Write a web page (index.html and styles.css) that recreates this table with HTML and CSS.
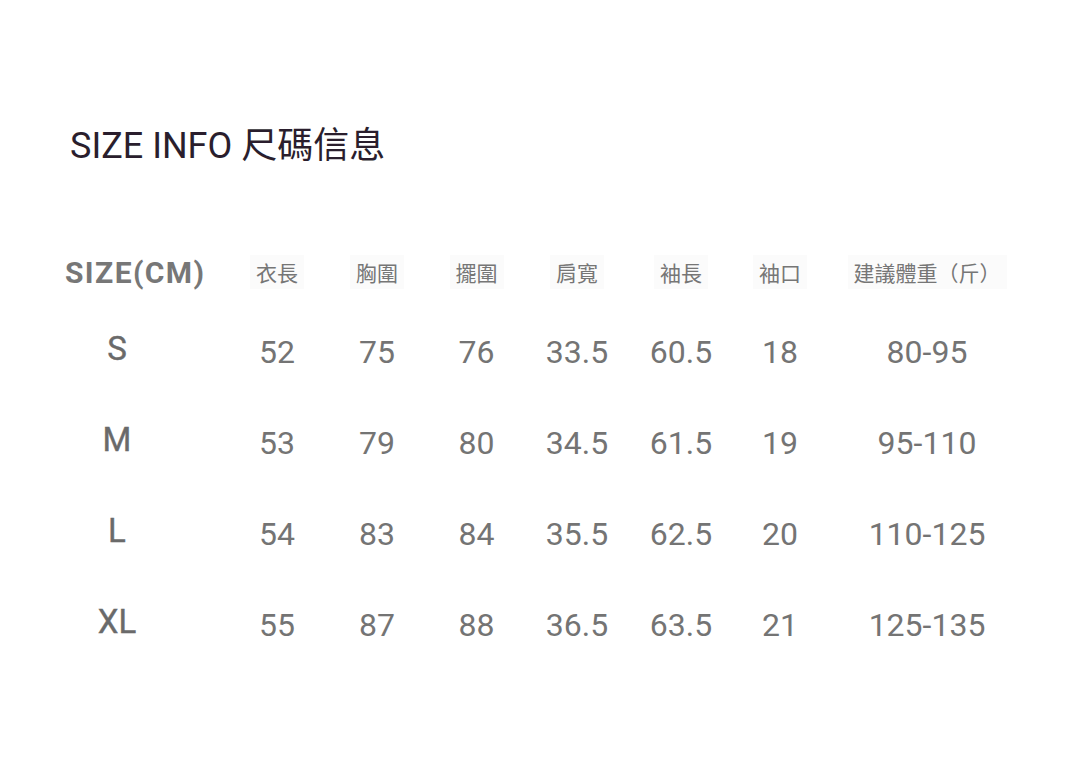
FILE: index.html
```html
<!DOCTYPE html>
<html lang="zh-Hant">
<head>
<meta charset="utf-8">
<title>SIZE INFO 尺碼信息</title>
<link rel="stylesheet" href="styles.css">
</head>
<body>
<main class="page">
  <h1 class="title">SIZE INFO 尺碼信息</h1>
  <div class="table">
    <div class="cell head size-head">SIZE(CM)</div>
    <div class="cell head"><span class="label">衣長</span></div>
    <div class="cell head"><span class="label">胸圍</span></div>
    <div class="cell head"><span class="label">擺圍</span></div>
    <div class="cell head"><span class="label">肩寬</span></div>
    <div class="cell head"><span class="label">袖長</span></div>
    <div class="cell head"><span class="label">袖口</span></div>
    <div class="cell head"><span class="label">建議體重（斤）</span></div>

    <div class="cell size">S</div>
    <div class="cell val">52</div>
    <div class="cell val">75</div>
    <div class="cell val">76</div>
    <div class="cell val">33.5</div>
    <div class="cell val">60.5</div>
    <div class="cell val">18</div>
    <div class="cell val">80-95</div>

    <div class="cell size">M</div>
    <div class="cell val">53</div>
    <div class="cell val">79</div>
    <div class="cell val">80</div>
    <div class="cell val">34.5</div>
    <div class="cell val">61.5</div>
    <div class="cell val">19</div>
    <div class="cell val">95-110</div>

    <div class="cell size">L</div>
    <div class="cell val">54</div>
    <div class="cell val">83</div>
    <div class="cell val">84</div>
    <div class="cell val">35.5</div>
    <div class="cell val">62.5</div>
    <div class="cell val">20</div>
    <div class="cell val">110-125</div>

    <div class="cell size">XL</div>
    <div class="cell val">55</div>
    <div class="cell val">87</div>
    <div class="cell val">88</div>
    <div class="cell val">36.5</div>
    <div class="cell val">63.5</div>
    <div class="cell val">21</div>
    <div class="cell val">125-135</div>
  </div>
</main>
</body>
</html>
```

FILE: styles.css
```css
html, body {
  margin: 0;
  padding: 0;
  background: #ffffff;
}

.page {
  width: 1080px;
  height: 771px;
  font-family: Roboto, "Noto Sans CJK TC", sans-serif;
  box-sizing: border-box;
  padding-top: 126px;
}

.title {
  margin: 0 0 0 70px;
  font-size: 36px;
  line-height: 40px;
  height: 40px;
  font-weight: 400;
  color: #2a1e2d;
}

.table {
  margin-top: 74px;
  margin-left: 7px;
  display: grid;
  grid-template-columns: 220px 100px 100px 99px 102px 106px 92px 202px;
  grid-template-rows: 64px 91px 91px 91px 91px;
}

.cell {
  display: flex;
  align-items: center;
  justify-content: center;
  color: #767676;
}

.head {
  font-size: 21px;
  font-family: "Noto Sans CJK TC", sans-serif;
}

.label {
  background: #fbfbfb;
  padding: 2px 6px;
}

.size-head {
  justify-content: flex-start;
  padding-left: 58px;
  font-family: Roboto, sans-serif;
  font-size: 30px;
  font-weight: 700;
  letter-spacing: 1.4px;
  color: #777777;
}

.size {
  font-size: 33px;
  font-weight: 400;
  color: #6a6a6a;
  -webkit-text-stroke: 0.4px #6a6a6a;
  padding-bottom: 2px;
}

.val {
  font-size: 32px;
  font-weight: 400;
  color: #747474;
  padding-top: 4px;
}
```
